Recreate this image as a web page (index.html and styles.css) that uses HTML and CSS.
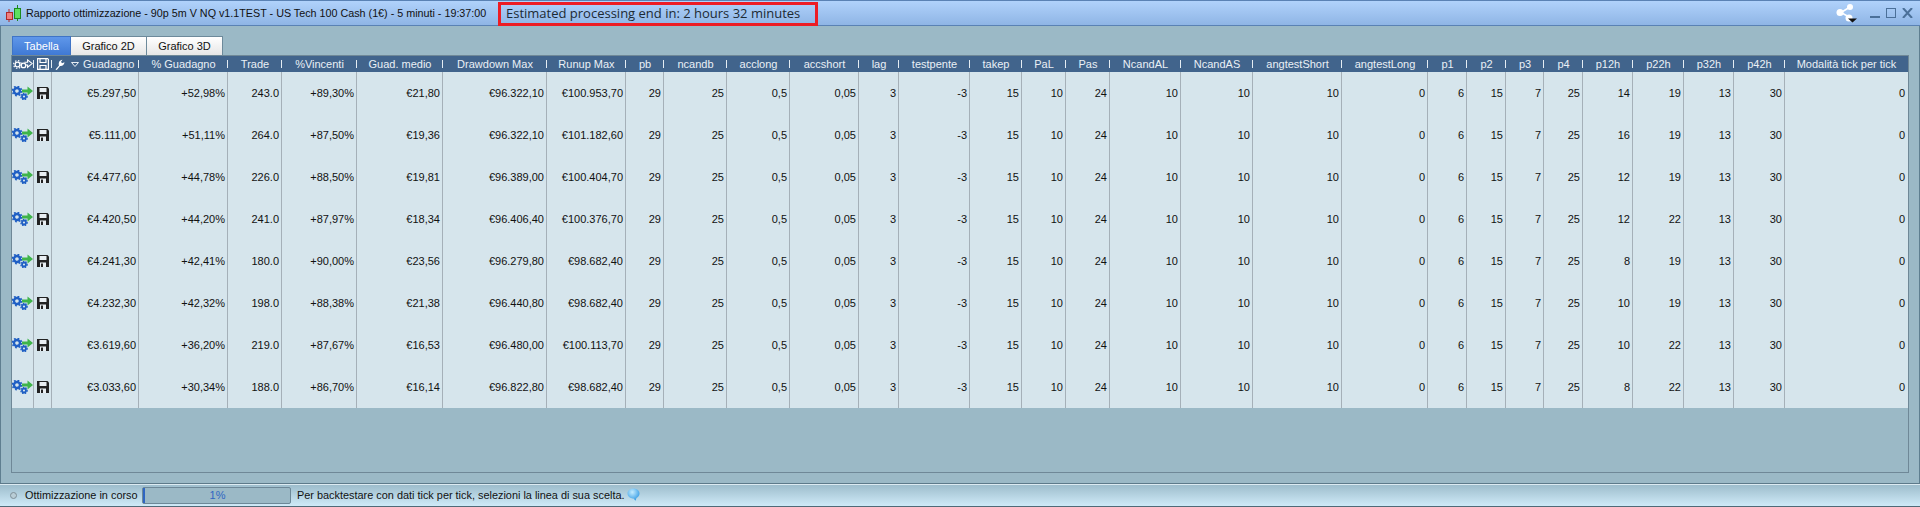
FILE: index.html
```html
<!DOCTYPE html>
<html lang="it">
<head>
<meta charset="utf-8">
<title>Rapporto ottimizzazione</title>
<link rel="stylesheet" href="styles.css">
</head>
<body>
<svg class="defs" width="0" height="0" aria-hidden="true">
  <defs>
    <symbol id="gears" viewBox="0 0 21 14">
      <circle cx="5" cy="5" r="3" fill="none" stroke="#1f5fc4" stroke-width="2.4"/>
      <circle cx="5" cy="5" r="4.6" fill="none" stroke="#1f5fc4" stroke-width="1.6" stroke-dasharray="1.8 1.8"/>
      <circle cx="12" cy="10.5" r="2" fill="none" stroke="#1f5fc4" stroke-width="1.8"/>
      <circle cx="12" cy="10.5" r="3.2" fill="none" stroke="#1f5fc4" stroke-width="1.2" stroke-dasharray="1.4 1.3"/>
      <path d="M10 3.5h5.5V0.5L21 5l-5.500 4.500V6.500H10z" fill="#3fb54a"/>
    </symbol>
    <symbol id="gears-w" viewBox="0 0 21 12">
      <circle cx="4.500" cy="6" r="2.600" fill="none" stroke="#fff" stroke-width="1.400"/>
      <circle cx="4.500" cy="6" r="4.200" fill="none" stroke="#fff" stroke-width="1.300" stroke-dasharray="1.600 1.700"/>
      <circle cx="11" cy="7" r="2.500" fill="none" stroke="#fff" stroke-width="1.400"/>
      <path d="M12 3.500h3.500V1L20.500 5l-5 4V6.500H13" fill="none" stroke="#fff" stroke-width="1.200"/>
    </symbol>
    <symbol id="floppy" viewBox="0 0 12 12">
      <path d="M0 0h10.500L12 1.500V12H0z" fill="#222"/>
      <rect x="2.500" y="1" width="7" height="4" fill="#e8eef2"/>
      <rect x="3" y="7.500" width="6" height="4.500" fill="#e8eef2"/>
      <rect x="4" y="8.500" width="2" height="3.500" fill="#222"/>
    </symbol>
    <symbol id="floppy-w" viewBox="0 0 12 12">
      <path d="M.6.600h10l.8.800v10H.6z" fill="none" stroke="#fff" stroke-width="1.200"/>
      <path d="M3 1v3.500h6V1M3 11V7.500h6V11" fill="none" stroke="#fff" stroke-width="1.200"/>
    </symbol>
  </defs>
</svg>

<header class="titlebar">
  <svg class="logo" width="21" height="20" viewBox="0 0 21 20">
    <path d="M8 6v13" stroke="#b02a2a" fill="none"/>
    <rect x="5.500" y="9.500" width="6" height="7" fill="#f08080" stroke="#b02a2a"/>
    <path d="M16.500 2v16" stroke="#1d8a1d" fill="none"/>
    <rect x="13.500" y="5.500" width="6" height="10" fill="#5fe05f" stroke="#1d8a1d"/>
  </svg>
  <span class="title">Rapporto ottimizzazione - 90p 5m V NQ v1.1TEST - US Tech 100 Cash (1€) - 5 minuti - 19:37:00</span>
  <span class="estimate">Estimated processing end in: 2 hours 32 minutes</span>
  <div class="win-controls">
    <svg class="share" width="21" height="19" viewBox="0 0 21 19">
      <path d="M14 3L5 8.500l9 5" fill="none" stroke="#fff" stroke-width="1.600"/>
      <circle cx="14" cy="3" r="3" fill="#fff"/>
      <circle cx="4" cy="8.500" r="3.500" fill="#fff"/>
      <circle cx="13" cy="14" r="3.500" fill="#fff"/>
      <path d="M12 14.500h9l-4.500 4z" fill="#111"/>
    </svg>
    <svg width="10" height="10" viewBox="0 0 10 10"><path d="M0 9h10" stroke="#4b7099" stroke-width="2"/></svg>
    <svg width="10" height="10" viewBox="0 0 10 10"><rect x=".5" y=".5" width="9" height="9" fill="none" stroke="#4b7099"/></svg>
    <svg width="11" height="10" viewBox="0 0 11 10"><path d="M1 0l9 10M10 0L1 10" stroke="#4b7099" stroke-width="2"/></svg>
  </div>
</header>

<main class="content">
  <nav class="tabs">
    <span class="tab tab-active">Tabella</span>
    <span class="tab tab-2d">Grafico 2D</span>
    <span class="tab tab-3d">Grafico 3D</span>
  </nav>
  <section class="panel">
    <div class="grid">
      <div class="th"><svg width="20" height="11"><use href="#gears-w"/></svg></div>
      <div class="th"><svg width="12" height="12"><use href="#floppy-w"/></svg></div>
      <div class="th th-main">
        <svg class="wrench" width="11" height="11" viewBox="0 0 11 11"><path d="M1.500 10.500L5 6.500C4.200 4 5.200 1 8.500.700L7 2.800l1 1.400 2.500-.9C10.300 6 8 7.500 6 7L2.800 11z" fill="#fff"/></svg>
        <svg class="sort" width="8" height="5" viewBox="0 0 8 5"><path d="M.5.500h7L4 4.500z" fill="none" stroke="#e8eef4"/></svg>
        <span>Guadagno</span>
      </div>
      <div class="th">% Guadagno</div><div class="th">Trade</div><div class="th">%Vincenti</div><div class="th">Guad. medio</div><div class="th">Drawdown Max</div><div class="th">Runup Max</div><div class="th">pb</div><div class="th">ncandb</div><div class="th">acclong</div><div class="th">accshort</div><div class="th">lag</div><div class="th">testpente</div><div class="th">takep</div><div class="th">PaL</div><div class="th">Pas</div><div class="th">NcandAL</div><div class="th">NcandAS</div><div class="th">angtestShort</div><div class="th">angtestLong</div><div class="th">p1</div><div class="th">p2</div><div class="th">p3</div><div class="th">p4</div><div class="th">p12h</div><div class="th">p22h</div><div class="th">p32h</div><div class="th">p42h</div><div class="th th-last">Modalità tick per tick</div>

      <div class="td td-icon"><svg width="21" height="14"><use href="#gears"/></svg></div><div class="td td-icon"><svg width="12" height="12"><use href="#floppy"/></svg></div><div class="td">€5.297,50</div><div class="td">+52,98%</div><div class="td">243.0</div><div class="td">+89,30%</div><div class="td">€21,80</div><div class="td">€96.322,10</div><div class="td">€100.953,70</div><div class="td">29</div><div class="td">25</div><div class="td">0,5</div><div class="td">0,05</div><div class="td">3</div><div class="td">-3</div><div class="td">15</div><div class="td">10</div><div class="td">24</div><div class="td">10</div><div class="td">10</div><div class="td">10</div><div class="td">0</div><div class="td">6</div><div class="td">15</div><div class="td">7</div><div class="td">25</div><div class="td">14</div><div class="td">19</div><div class="td">13</div><div class="td">30</div><div class="td td-last">0</div>

      <div class="td td-icon"><svg width="21" height="14"><use href="#gears"/></svg></div><div class="td td-icon"><svg width="12" height="12"><use href="#floppy"/></svg></div><div class="td">€5.111,00</div><div class="td">+51,11%</div><div class="td">264.0</div><div class="td">+87,50%</div><div class="td">€19,36</div><div class="td">€96.322,10</div><div class="td">€101.182,60</div><div class="td">29</div><div class="td">25</div><div class="td">0,5</div><div class="td">0,05</div><div class="td">3</div><div class="td">-3</div><div class="td">15</div><div class="td">10</div><div class="td">24</div><div class="td">10</div><div class="td">10</div><div class="td">10</div><div class="td">0</div><div class="td">6</div><div class="td">15</div><div class="td">7</div><div class="td">25</div><div class="td">16</div><div class="td">19</div><div class="td">13</div><div class="td">30</div><div class="td td-last">0</div>

      <div class="td td-icon"><svg width="21" height="14"><use href="#gears"/></svg></div><div class="td td-icon"><svg width="12" height="12"><use href="#floppy"/></svg></div><div class="td">€4.477,60</div><div class="td">+44,78%</div><div class="td">226.0</div><div class="td">+88,50%</div><div class="td">€19,81</div><div class="td">€96.389,00</div><div class="td">€100.404,70</div><div class="td">29</div><div class="td">25</div><div class="td">0,5</div><div class="td">0,05</div><div class="td">3</div><div class="td">-3</div><div class="td">15</div><div class="td">10</div><div class="td">24</div><div class="td">10</div><div class="td">10</div><div class="td">10</div><div class="td">0</div><div class="td">6</div><div class="td">15</div><div class="td">7</div><div class="td">25</div><div class="td">12</div><div class="td">19</div><div class="td">13</div><div class="td">30</div><div class="td td-last">0</div>

      <div class="td td-icon"><svg width="21" height="14"><use href="#gears"/></svg></div><div class="td td-icon"><svg width="12" height="12"><use href="#floppy"/></svg></div><div class="td">€4.420,50</div><div class="td">+44,20%</div><div class="td">241.0</div><div class="td">+87,97%</div><div class="td">€18,34</div><div class="td">€96.406,40</div><div class="td">€100.376,70</div><div class="td">29</div><div class="td">25</div><div class="td">0,5</div><div class="td">0,05</div><div class="td">3</div><div class="td">-3</div><div class="td">15</div><div class="td">10</div><div class="td">24</div><div class="td">10</div><div class="td">10</div><div class="td">10</div><div class="td">0</div><div class="td">6</div><div class="td">15</div><div class="td">7</div><div class="td">25</div><div class="td">12</div><div class="td">22</div><div class="td">13</div><div class="td">30</div><div class="td td-last">0</div>

      <div class="td td-icon"><svg width="21" height="14"><use href="#gears"/></svg></div><div class="td td-icon"><svg width="12" height="12"><use href="#floppy"/></svg></div><div class="td">€4.241,30</div><div class="td">+42,41%</div><div class="td">180.0</div><div class="td">+90,00%</div><div class="td">€23,56</div><div class="td">€96.279,80</div><div class="td">€98.682,40</div><div class="td">29</div><div class="td">25</div><div class="td">0,5</div><div class="td">0,05</div><div class="td">3</div><div class="td">-3</div><div class="td">15</div><div class="td">10</div><div class="td">24</div><div class="td">10</div><div class="td">10</div><div class="td">10</div><div class="td">0</div><div class="td">6</div><div class="td">15</div><div class="td">7</div><div class="td">25</div><div class="td">8</div><div class="td">19</div><div class="td">13</div><div class="td">30</div><div class="td td-last">0</div>

      <div class="td td-icon"><svg width="21" height="14"><use href="#gears"/></svg></div><div class="td td-icon"><svg width="12" height="12"><use href="#floppy"/></svg></div><div class="td">€4.232,30</div><div class="td">+42,32%</div><div class="td">198.0</div><div class="td">+88,38%</div><div class="td">€21,38</div><div class="td">€96.440,80</div><div class="td">€98.682,40</div><div class="td">29</div><div class="td">25</div><div class="td">0,5</div><div class="td">0,05</div><div class="td">3</div><div class="td">-3</div><div class="td">15</div><div class="td">10</div><div class="td">24</div><div class="td">10</div><div class="td">10</div><div class="td">10</div><div class="td">0</div><div class="td">6</div><div class="td">15</div><div class="td">7</div><div class="td">25</div><div class="td">10</div><div class="td">19</div><div class="td">13</div><div class="td">30</div><div class="td td-last">0</div>

      <div class="td td-icon"><svg width="21" height="14"><use href="#gears"/></svg></div><div class="td td-icon"><svg width="12" height="12"><use href="#floppy"/></svg></div><div class="td">€3.619,60</div><div class="td">+36,20%</div><div class="td">219.0</div><div class="td">+87,67%</div><div class="td">€16,53</div><div class="td">€96.480,00</div><div class="td">€100.113,70</div><div class="td">29</div><div class="td">25</div><div class="td">0,5</div><div class="td">0,05</div><div class="td">3</div><div class="td">-3</div><div class="td">15</div><div class="td">10</div><div class="td">24</div><div class="td">10</div><div class="td">10</div><div class="td">10</div><div class="td">0</div><div class="td">6</div><div class="td">15</div><div class="td">7</div><div class="td">25</div><div class="td">10</div><div class="td">22</div><div class="td">13</div><div class="td">30</div><div class="td td-last">0</div>

      <div class="td td-icon"><svg width="21" height="14"><use href="#gears"/></svg></div><div class="td td-icon"><svg width="12" height="12"><use href="#floppy"/></svg></div><div class="td">€3.033,60</div><div class="td">+30,34%</div><div class="td">188.0</div><div class="td">+86,70%</div><div class="td">€16,14</div><div class="td">€96.822,80</div><div class="td">€98.682,40</div><div class="td">29</div><div class="td">25</div><div class="td">0,5</div><div class="td">0,05</div><div class="td">3</div><div class="td">-3</div><div class="td">15</div><div class="td">10</div><div class="td">24</div><div class="td">10</div><div class="td">10</div><div class="td">10</div><div class="td">0</div><div class="td">6</div><div class="td">15</div><div class="td">7</div><div class="td">25</div><div class="td">8</div><div class="td">22</div><div class="td">13</div><div class="td">30</div><div class="td td-last">0</div>
    </div>
  </section>
</main>

<footer class="statusbar">
  <span class="radio"></span>
  <span class="status-label">Ottimizzazione in corso</span>
  <div class="progress"><span class="progress-fill"></span><span class="progress-text">1%</span></div>
  <span class="status-hint">Per backtestare con dati tick per tick, selezioni la linea di sua scelta.</span>
  <svg class="bubble" width="13" height="13" viewBox="0 0 13 13">
    <defs><radialGradient id="bub" cx=".4" cy=".3" r=".8"><stop offset="0" stop-color="#c4ecff"/><stop offset="1" stop-color="#1f8fe0"/></radialGradient></defs>
    <path d="M6.500.500C10 .500 12.500 2.700 12.500 5.500c0 2.300-1.500 3.800-3 4.500L8.500 12.800 6.500 10.500C3 10.500.500 8.300.500 5.500S3 .500 6.500.500z" fill="url(#bub)"/>
  </svg>
</footer>
</body>
</html>
```

FILE: styles.css
```css
* { box-sizing: border-box; }

html, body {
  margin: 0;
  height: 507px;
  overflow: hidden;
}

body {
  display: flex;
  flex-direction: column;
  font-family: "Liberation Sans", Arial, sans-serif;
  font-size: 11px;
  color: #111;
  background: #9bb9c6;
}

.defs { display: block; height: 0; }

/* Title bar */
.titlebar {
  height: 26px;
  flex: none;
  display: flex;
  align-items: center;
  border-top: 1px solid #5a82b4;
  border-bottom: 1px solid #5a82b4;
  background: linear-gradient(#b0d2fb, #8fb5e5);
}

.logo { flex: none; margin: 0 4px 0 1px; }

.title {
  width: 472px;
  flex: none;
  font-size: 10.750px;
  white-space: nowrap;
}

.estimate {
  width: 320px;
  height: 24px;
  flex: none;
  margin-top: 1px;
  padding-left: 5px;
  border: 3px solid #ed1c24;
  font-family: "Open Sans", "Noto Sans", sans-serif;
  font-size: 13px;
  line-height: 17px;
  color: #1c2a33;
  white-space: nowrap;
}

.win-controls {
  margin-left: auto;
  display: flex;
  align-items: center;
  gap: 6px;
  padding-right: 7px;
}

.share { margin-right: 7px; }

/* Main area */
.content {
  flex: 1;
  min-height: 0;
  padding: 10px 10px 10px 11px;
  border-left: 1px solid #5f7f90;
  border-right: 1px solid #5f7f90;
}

.tabs {
  display: flex;
  height: 19px;
}

.tab {
  display: flex;
  align-items: center;
  justify-content: center;
  font-size: 11px;
  border: 1px solid #6d8a9b;
  border-bottom: 0;
  border-left: 0;
  background: linear-gradient(#ffffff, #e6e6e6);
}

.tab-active {
  width: 59px;
  color: #fff;
  border: 1px solid #3f74c6;
  border-bottom: 0;
  background: linear-gradient(#5f97ea, #3f79d4);
}

.tab-2d { width: 76px; }
.tab-3d { width: 76px; }

.panel {
  height: 418px;
  border: 1px solid #6f8897;
  margin-left: -1px;
}

.grid {
  display: grid;
  grid-template-columns: 22px 18px 87px 89px 54px 75px 86px 104px 79px 38px 63px 63px 69px 40px 71px 52px 44px 44px 71px 72px 89px 86px 39px 39px 38px 39px 50px 51px 50px 51px 123px;
  grid-template-rows: 16px repeat(8, 42px);
}

.th {
  display: flex;
  align-items: center;
  justify-content: center;
  overflow: hidden;
  white-space: nowrap;
  color: #eaf0f6;
  background: linear-gradient(#e4ecf3, #e4ecf3) right center / 1px 8px no-repeat #41648c;
}

.th-main {
  justify-content: flex-start;
  padding-left: 2px;
}

.th-main .sort { margin: 0 4px 0 6px; }
.th-last { background: #41648c; }

.td {
  display: flex;
  align-items: center;
  justify-content: flex-end;
  padding-right: 2px;
  background: #d6e5ec;
  border-right: 1px solid #a5b0b8;
  white-space: nowrap;
}

.td-icon {
  justify-content: center;
  padding-right: 0;
}

.td-last { border-right: 0; padding-right: 3px; }

/* Status bar */
.statusbar {
  height: 24px;
  flex: none;
  display: flex;
  align-items: center;
  padding-left: 10px;
  border-top: 1px solid #5d7a8a;
  border-bottom: 1px solid #4f6a78;
  box-shadow: inset 0 1px 0 #dcebf2;
  background: linear-gradient(#9bbbca, #cfeaf8);
}

.radio {
  width: 7px;
  height: 7px;
  flex: none;
  border: 1px solid #7f8f98;
  border-radius: 50%;
  background: #b9cdd6;
}

.status-label { margin-left: 8px; width: 117px; flex: none; font-size: 10.900px; white-space: nowrap; }

.progress {
  width: 149px;
  height: 17px;
  flex: none;
  display: flex;
  align-items: center;
  border: 1px solid #6d8898;
  border-radius: 2px;
  background: #9bb9c6;
}

.progress-fill {
  width: 2px;
  height: 100%;
  flex: none;
  background: #2f66c2;
}

.progress-text {
  flex: 1;
  text-align: center;
  color: #2f66c2;
}

.status-hint { margin-left: 6px; width: 330px; flex: none; font-size: 10.900px; white-space: nowrap; }

.bubble { flex: none; margin-top: -2px; }
```
